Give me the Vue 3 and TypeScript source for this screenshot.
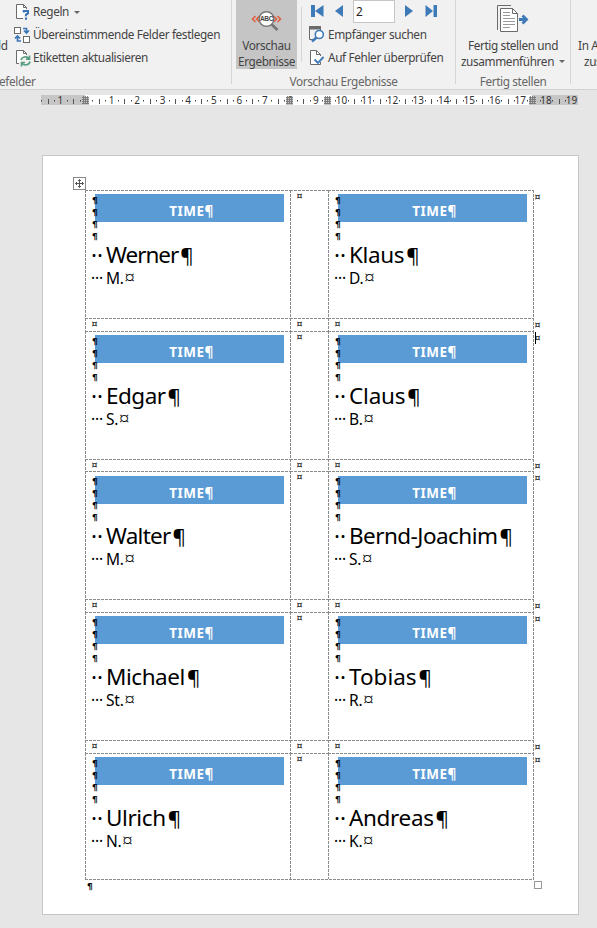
<script setup lang="ts">
interface Person {
  name: string
  initial: string
  tracking: number
}

interface LabelRow {
  left: Person
  right: Person
  height: number
  gap: number
  barTop: number
}

const person = (name: string, initial: string, tracking: number): Person => ({ name, initial, tracking })

const rows: LabelRow[] = [
  { left: person('Werner', 'M.', -1), right: person('Klaus', 'D.', -0.35), height: 128, gap: 13, barTop: 4 },
  { left: person('Edgar', 'S.', -0.5), right: person('Claus', 'B.', -0.2), height: 128, gap: 12, barTop: 4 },
  { left: person('Walter', 'M.', -0.75), right: person('Bernd-Joachim', 'S.', -0.55), height: 128, gap: 13, barTop: 5 },
  { left: person('Michael', 'St.', -0.45), right: person('Tobias', 'R.', 0), height: 128, gap: 13, barTop: 4 },
  { left: person('Ulrich', 'N.', -0.4), right: person('Andreas', 'K.', -0.35), height: 126, gap: 0, barTop: 4 },
]

// Ruler geometry, measured from the ruler's left edge.
const cm = 25.55
const zero = 45
const numbers = [-1, ...Array.from({ length: 19 }, (_, i) => i + 1)]
const at = (value: number): number => zero + value * cm
const halves = Array.from({ length: 20 }, (_, i) => Math.round(at(i - 1.5)) + 0.5).concat(Math.round(at(18.5)) + 0.5)
const quarters = Array.from({ length: 42 }, (_, i) => Math.round(at(-1.75 + i * 0.5))).filter((x) => x < 530)
const columnMarks = [41, 245, 283, 488]
</script>

<template>
  <div class="window">
    <header class="ribbon">
      <section class="group fields">
        <span class="cut-label">ld</span>
        <div class="commands">
          <div class="command">
            <svg class="icon" width="18" height="18" viewBox="0 0 18 18">
              <path d="M9 15.500H2.500V1.500H9.500L12.500 4.500V6" fill="#fff" stroke="#6b6b6b" />
              <path d="M9.500 1.500V4.500H12.500" fill="none" stroke="#6b6b6b" />
              <path d="M9.700 9.500V8H14V10.400L12 11.600V13.200M12 14.500V16.700" fill="none" stroke="#3a76b5" stroke-width="2" />
            </svg>
            <span>Regeln</span><i class="caret"></i>
          </div>
          <div class="command">
            <svg class="icon" width="18" height="18" viewBox="0 0 18 18">
              <rect x="0.500" y="1.500" width="6" height="6" fill="#fff" stroke="#6b6b6b" />
              <rect x="9.500" y="10.500" width="6" height="6" fill="#fff" stroke="#6b6b6b" />
              <path d="M9 2.500H12.500V6M10 4.500L12.500 7L15 4.500M7 15H3.500V11.500M1 12.500L3.500 10L6 12.500" fill="none" stroke="#3a76b5" stroke-width="1.700" />
            </svg>
            <span>Übereinstimmende Felder festlegen</span>
          </div>
          <div class="command">
            <svg class="icon" width="18" height="18" viewBox="0 0 18 18">
              <path d="M5 14.500H2.500V1.500H9.500L12.500 4.500V6" fill="#fff" stroke="#6b6b6b" />
              <path d="M9.500 1.500V4.500H12.500" fill="none" stroke="#6b6b6b" />
              <path d="M7 11A4.500 4 0 0 1 15 9.500M15.500 6.500V10.200H12M16 12.500A4.500 4 0 0 1 8 14.300M7.500 17.500V13.500H11" fill="none" stroke="#5b9f82" stroke-width="1.700" />
            </svg>
            <span>Etiketten aktualisieren</span>
          </div>
        </div>
        <div class="caption cap-fields">efelder</div>
      </section>

      <section class="group preview">
        <div class="preview-body">
          <button class="toggle" type="button">
            <svg width="34" height="26" viewBox="0 0 34 26">
              <path d="M5.500 8L2.500 11L5.500 14M9.500 8L6.500 11L9.500 14M23.500 8L26.500 11L23.500 14M27.500 8L30.500 11L27.500 14" fill="none" stroke="#e25c3c" stroke-width="1.500" />
              <circle cx="16.500" cy="11" r="7.300" fill="#fff" stroke="#777" stroke-width="1.500" />
              <path d="M21.700 16.500L27.500 22" stroke="#777" stroke-width="3" />
              <text x="16.500" y="13.200" text-anchor="middle" class="abc">ABC</text>
            </svg>
            <span>Vorschau</span>
            <span>Ergebnisse</span>
          </button>
          <i class="inner-rule"></i>
          <div class="preview-tools">
            <div class="navigator">
              <svg width="13" height="12" viewBox="0 0 13 12"><path d="M0 0H4V12H0ZM12.500 0V12L4 6Z" fill="#3f7ab8" /></svg>
              <svg class="prev" width="8" height="12" viewBox="0 0 8 12"><path d="M8 0V12L0 6Z" fill="#3f7ab8" /></svg>
              <span class="record">2</span>
              <svg class="next" width="8" height="12" viewBox="0 0 8 12"><path d="M0 0V12L8 6Z" fill="#3f7ab8" /></svg>
              <svg class="last" width="13" height="12" viewBox="0 0 13 12"><path d="M0.500 0L8 6L0.500 12ZM8.500 0H12V12H8.500Z" fill="#3f7ab8" /></svg>
            </div>
            <div class="command">
              <svg class="icon" width="18" height="18" viewBox="0 0 18 18">
                <path d="M1.500 3V13.500H5M12.500 3V5" fill="none" stroke="#6b6b6b" />
                <path d="M1 0H13V3.500H1Z" fill="#6b6b6b" />
                <circle cx="11.300" cy="8.500" r="4" fill="#fff" stroke="#3f7ab8" stroke-width="1.600" />
                <path d="M8.500 11.500L4 15.500" stroke="#3f7ab8" stroke-width="2.500" />
              </svg>
              <span>Empfänger suchen</span>
            </div>
            <div class="command">
              <svg class="icon" width="18" height="18" viewBox="0 0 18 18">
                <path d="M12.500 13V15.500H2.500V1.500H8.500L12.500 5.500V7" fill="#fff" stroke="#6b6b6b" />
                <path d="M8.500 1.500V5.500H12.500" fill="none" stroke="#6b6b6b" />
                <path d="M6.500 10.500L10 14L15.500 8" fill="none" stroke="#3f7ab8" stroke-width="1.900" />
              </svg>
              <span>Auf Fehler überprüfen</span>
            </div>
          </div>
        </div>
        <div class="caption">Vorschau Ergebnisse</div>
      </section>

      <section class="group finish">
        <div class="finish-body">
          <svg width="34" height="30" viewBox="0 0 34 30">
            <path d="M2.500 26V1.500H16" fill="none" stroke="#6b6b6b" />
            <path d="M5.500 4.500H17.500L22.500 9.500V27.500H5.500Z" fill="#fff" stroke="#6b6b6b" />
            <path d="M17.500 4.500V9.500H22.500" fill="none" stroke="#6b6b6b" />
            <path d="M8 8.500H15M8 11.500H15M8 14.500H20M8 17.500H20M8 20.500H20M8 23.500H15" stroke="#999" />
            <path d="M24 15.500H31M27.500 11.500L31.500 15.500L27.500 19.500" fill="none" stroke="#3f7ab8" stroke-width="2.800" />
          </svg>
          <span>Fertig stellen und</span>
          <span>zusammenführen<i class="caret"></i></span>
        </div>
        <div class="caption">Fertig stellen</div>
      </section>

      <section class="group cut">
        <span>In A</span>
        <span class="second">zus</span>
      </section>
    </header>

    <svg class="ruler" width="537" height="11" viewBox="0 0 537 11">
      <rect width="537" height="10" fill="#fff" />
      <rect width="44" height="10" fill="#c6c6c6" />
      <rect x="491" width="46" height="10" fill="#c6c6c6" />
      <text v-for="n in numbers" :key="n" :x="at(n)" y="9" text-anchor="middle">{{ Math.abs(n) }}</text>
      <path v-for="x in halves" :key="'h' + x" :d="`M${x} 4V9`" stroke="#555" />
      <rect v-for="x in quarters" :key="'q' + x" :x="x" y="5" width="1" height="1.500" fill="#444" />
      <g v-for="x in columnMarks" :key="'c' + x">
        <rect :x="x" y="2" width="7" height="8" fill="#c6c6c6" />
        <path :d="`M${x + 1.5} 1V9M${x + 3.5} 1V9M${x + 5.5} 1V9M${x} 2.5H${x + 7}M${x} 4.5H${x + 7}M${x} 6.5H${x + 7}M${x} 8.5H${x + 7}`" stroke="#777" stroke-width="0.900" />
      </g>
    </svg>

    <main class="page">
      <svg class="move-handle" width="13" height="13" viewBox="0 0 13 13">
        <rect x="0.500" y="0.500" width="12" height="12" fill="#fff" stroke="#8a8a8a" />
        <path d="M6.500 2.500V10.500M2.500 6.500H10.500M5 4L6.500 2.500L8 4M5 9L6.500 10.500L8 9M4 5L2.500 6.500L4 8M9 5L10.500 6.500L9 8" fill="none" stroke="#555" />
      </svg>
      <div class="table">
        <template v-for="(row, index) in rows" :key="index">
          <div class="row" :style="{ height: row.height + 'px' }">
            <div class="cell label" :style="{ '--bar': row.barTop + 'px' }">
              <div class="bar">TIME¶</div>
              <div class="marks"><span v-for="n in 4" :key="n">¶</span></div>
              <div class="name"><span class="dots">··</span><span :style="{ letterSpacing: row.left.tracking + 'px' }">{{ row.left.name }}</span><b>¶</b></div>
              <div class="initial"><span class="dots">···</span>{{ row.left.initial }}<b>¤</b></div>
            </div>
            <div class="cell"><span class="end">¤</span></div>
            <div class="cell label" :style="{ '--bar': row.barTop + 'px' }">
              <div class="bar">TIME¶</div>
              <div class="marks"><span v-for="n in 4" :key="n">¶</span></div>
              <div class="name"><span class="dots">··</span><span :style="{ letterSpacing: row.right.tracking + 'px' }">{{ row.right.name }}</span><b>¶</b></div>
              <div class="initial"><span class="dots">···</span>{{ row.right.initial }}<b>¤</b></div>
            </div>
            <div class="row-end" :class="{ cursor: index === 1 }"><span class="end">¤</span></div>
          </div>
          <div v-if="row.gap" class="row" :style="{ height: row.gap + 'px' }">
            <div class="cell"><span class="end">¤</span></div>
            <div class="cell"><span class="end">¤</span></div>
            <div class="cell"><span class="end">¤</span></div>
            <div class="row-end"><span class="end">¤</span></div>
          </div>
        </template>
        <i class="bottom-line"></i>
      </div>
      <div class="after">
        <span>¶</span>
        <i class="resize"></i>
      </div>
    </main>
  </div>
</template>

<style>
body {
  background: #e6e6e6;
  overflow: hidden;
}
</style>

<style scoped>
.window {
  width: 597px;
  height: 928px;
  overflow: hidden;
  background: #e6e6e6;
  font-family: "Noto Sans", "Open Sans", sans-serif;
  font-size: 12px;
  color: #444;
}
.window * {
  box-sizing: border-box;
}
.ribbon {
  display: flex;
  height: 90px;
  background: #f1f1f1;
  border-bottom: 1px solid #d2d2d2;
  font-size: 11.800px;
  letter-spacing: -0.370px;
  white-space: nowrap;
}
.group {
  display: grid;
  flex: none;
  height: 84px;
  grid-template-rows: 73px 11px;
  border-right: 1px solid #d5d5d5;
}
.fields {
  width: 232px;
  grid-template-columns: 14px 1fr;
}
.preview { width: 224px; }
.finish { width: 115px; }
.cut-label {
  margin-left: -2px;
  padding-top: 36px;
  line-height: 18px;
}
.commands { padding-top: 3px; }
.command {
  display: flex;
  align-items: center;
  height: 23px;
  line-height: 18px;
}
.command span { margin-top: -2px; }
.commands .command:first-child { height: 20px; padding-bottom: 2px; }
.icon { flex: none; margin-right: 1px; }
.preview-tools .icon { margin-right: 2px; }
.caret {
  display: inline-block;
  margin-left: 5px;
  border: 3px solid transparent;
  border-top-color: #666;
  border-bottom: 0;
  vertical-align: 3px;
}
.caption {
  line-height: 16px;
  color: #666;
  text-align: center;
}
.cap-fields {
  grid-column: 1 / -1;
  margin-left: -1px;
  text-align: left;
}
.preview-body {
  display: flex;
  padding-left: 4px;
}
.toggle {
  display: flex;
  flex-direction: column;
  align-items: center;
  width: 61px;
  height: 69px;
  padding: 8px 0 0;
  border: 0;
  background: #c5c5c5;
  color: #444;
  font: inherit;
  letter-spacing: inherit;
  line-height: 16px;
}
.toggle svg { flex: none; margin-bottom: 3px; }
.abc {
  font: bold 6.500px "Liberation Sans", sans-serif;
  fill: #444;
}
.inner-rule {
  width: 1px;
  height: 55px;
  margin: 7px 6px 0 4px;
  background: #d5d5d5;
}
.navigator {
  display: flex;
  height: 23px;
  padding-left: 3px;
}
.navigator svg { flex: none; margin-top: 5px; }
.navigator .prev { margin-left: 11px; }
.navigator .next { margin-left: 10px; }
.navigator .last { margin-left: 12px; }
.record {
  width: 42px;
  height: 23px;
  margin-left: 10px;
  padding-left: 2px;
  border: 1px solid #c6c6c6;
  background: #fff;
  color: #222;
  line-height: 21px;
}
.finish-body {
  display: flex;
  flex-direction: column;
  align-items: center;
  padding-top: 4px;
  line-height: 16px;
}
.finish-body svg { flex: none; margin: 0 2px 3px 0; }
.group.cut {
  display: flex;
  flex-direction: column;
  padding: 37px 0 0 7px;
  border: 0;
  line-height: 16px;
}
.second { padding-left: 6px; }
.ruler {
  display: block;
  margin: 5px 0 0 41px;
  overflow: visible;
}
.ruler text {
  font: 10px "Noto Sans", sans-serif;
  fill: #333;
}
.page {
  width: 537px;
  height: 760px;
  margin: 49px 0 0 42px;
  padding: 21px 0 0 30px;
  border: 1px solid #c6c6c6;
  background: #fff;
  color: #000;
}
.move-handle { display: block; }
.table {
  width: 461px;
  margin-left: 12px;
}
.row {
  display: grid;
  grid-template-columns: 205px 38px 205px 12px;
}
.cell {
  position: relative;
  padding-left: 6px;
  background:
    repeating-linear-gradient(90deg, #8a8a8a 0 3px, transparent 3px 4px) 0 0 / 100% 1px no-repeat,
    repeating-linear-gradient(180deg, #8a8a8a 0 3px, transparent 3px 4px) 0 0 / 1px 100% no-repeat;
}
.row-end {
  position: relative;
  padding: 1px 0 0 1px;
  background: repeating-linear-gradient(180deg, #8a8a8a 0 3px, transparent 3px 4px) 0 0 / 1px 100% no-repeat;
}
.row-end.cursor::before {
  content: "";
  position: absolute;
  left: 2px;
  top: 1px;
  width: 1px;
  height: 12px;
  background: #000;
}
.end {
  display: block;
  padding-left: 0.500px;
  font: 9.500px/12px "DejaVu Sans", sans-serif;
}
.bottom-line {
  display: block;
  width: 449px;
  height: 1px;
  background: repeating-linear-gradient(90deg, #8a8a8a 0 3px, transparent 3px 4px);
}
.bar {
  position: absolute;
  left: 10px;
  top: var(--bar);
  width: 189px;
  height: 28px;
  padding: 3px 0 0 4px;
  background: #5b9bd5;
  color: #fff;
  font-weight: bold;
  font-size: 13.500px;
  letter-spacing: 0.500px;
  line-height: 28px;
  text-align: center;
}
.marks {
  position: relative;
  display: flex;
  flex-direction: column;
  padding: 5px 0 0 1px;
  font: bold 9px/12px "DejaVu Sans", sans-serif;
}
.name {
  margin-top: -1px;
  font-size: 22.500px;
  line-height: 26px;
  white-space: nowrap;
}
.name b, .initial b { font-weight: normal; }
.name b {
  margin-left: 2px;
  font-size: 20.500px;
  line-height: 0;
}
.name .dots {
  display: inline-block;
  width: 15px;
}
.initial {
  font-size: 15.500px;
  line-height: 20px;
  letter-spacing: -0.200px;
  white-space: nowrap;
}
.initial b {
  margin-left: 0.500px;
  font-size: 19px;
  line-height: 0;
  font-weight: 300;
}
.initial .dots {
  display: inline-block;
  width: 15px;
}
.after {
  display: flex;
  justify-content: space-between;
  width: 469px;
  padding: 1px 0 0 14px;
  font: bold 9px/12px "DejaVu Sans", sans-serif;
}
.resize {
  width: 8px;
  height: 8px;
  border: 1px solid #999;
}
</style>
